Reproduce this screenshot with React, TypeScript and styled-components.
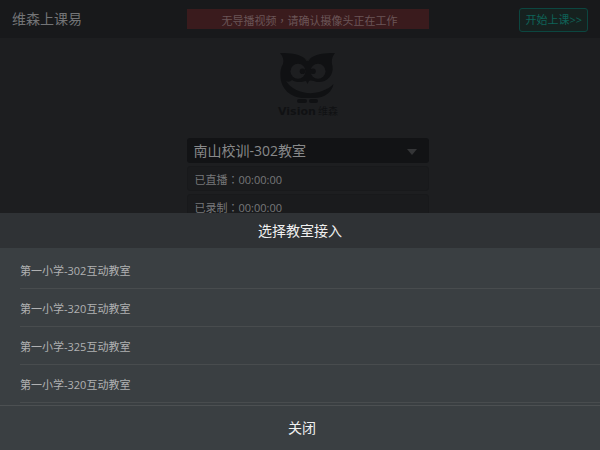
import React from "react";
import styled, { createGlobalStyle } from "styled-components";

const GlobalStyle = createGlobalStyle`
  * { box-sizing: border-box; }
  body {
    margin: 0;
    background: #1d1e20;
    font-family: "Open Sans", "Noto Sans CJK SC", sans-serif;
    font-size: 11px;
    line-height: 16px;
  }
  button, select { font: inherit; }
`;

const Page = styled.div`
  min-height: 100vh;
  color: #77787a;
`;

const Header = styled.header`
  display: grid;
  grid-template-columns: 1fr 242px 1fr;
  align-items: center;
  height: 38px;
  padding-left: 15px;
  background: #18191b;
`;

const Brand = styled.h1`
  margin: 0 0 0 -3px;
  font-size: 14px;
  line-height: 20px;
  font-weight: 400;
  color: #737476;
`;

const Alert = styled.div`
  height: 20px;
  padding-left: 4px;
  line-height: 22px;
  text-align: center;
  background: #3a1b1d;
  color: #6b5557;
`;

const Punct = styled.span`
  font-family: "Noto Sans CJK TC", sans-serif;
`;

const StartButton = styled.button`
  justify-self: end;
  height: 24px;
  margin: 2px 12px 0 0;
  padding: 0 5px;
  border: 1px solid #0c4640;
  border-radius: 3px;
  background: #16211f;
  color: #0e6358;
  white-space: nowrap;
`;

const Main = styled.main`
  display: flex;
  flex-direction: column;
  align-items: center;
  padding-left: 15px;
`;

const Logo = styled.svg`
  width: 64px;
  height: 72px;
  margin: 10px 0 18px;
`;

const Panel = styled.div`
  display: flex;
  flex-direction: column;
  gap: 3px;
  width: 242px;
`;

const SelectBox = styled.div`
  display: grid;
  align-items: center;
  height: 25px;
  border-radius: 3px;
  background: #121315;

  > * { grid-area: 1 / 1; }
`;

const RoomSelect = styled.select`
  appearance: none;
  width: 100%;
  height: 25px;
  padding: 0 24px 0 7px;
  border: 0;
  background: transparent;
  color: #88898a;
  font-size: 14px;
`;

const Arrow = styled.svg`
  justify-self: end;
  width: 10px;
  height: 6px;
  margin: 2px 12px 0 0;
  pointer-events: none;
`;

const Status = styled.div`
  height: 25px;
  padding: 0 7px;
  line-height: 24px;
  border: 1px solid #18191b;
  border-radius: 3px;
  background: #1a1b1d;
`;

const Sheet = styled.section`
  position: fixed;
  left: 0;
  right: 0;
  bottom: 0;
  background: #3a3f42;
`;

const SheetTitle = styled.h2`
  margin: 0;
  font-size: 14px;
  line-height: 35px;
  font-weight: 400;
  text-align: center;
  background: #2f3235;
  color: #f0f0f0;
`;

const RoomList = styled.ul`
  margin: 0;
  padding: 3px 0 2px 20px;
  list-style: none;
`;

const RoomItem = styled.li`
  border-bottom: 1px solid #484c4e;
`;

const RoomButton = styled.button`
  display: block;
  width: 100%;
  padding: 12px 0 9px;
  border: 0;
  background: none;
  color: #b0b1b2;
  text-align: left;
`;

const CloseButton = styled.button`
  display: block;
  width: 100%;
  height: 45px;
  padding: 0 0 0 4px;
  border: 0;
  border-top: 1px solid #4c5052;
  background: none;
  color: #f0f0f0;
  font-size: 14px;
`;

const rooms = [
  "第一小学-302互动教室",
  "第一小学-320互动教室",
  "第一小学-325互动教室",
  "第一小学-320互动教室",
];

const statuses = [
  { label: "已直播", time: "00:00:00" },
  { label: "已录制", time: "00:00:00" },
];

const WordMark = styled.text`
  font-family: "DejaVu Sans", sans-serif;
  font-size: 11px;
  font-weight: 700;
`;

const ChineseMark = styled.text`
  font-family: "Noto Sans CJK SC", sans-serif;
  font-size: 10px;
`;

function OwlLogo() {
  return (
    <Logo viewBox="0 0 64 72" role="img" aria-label="Vision维森" fill="#101113">
      <path d="M4 5C13 5 25 5 31.500 13C38 5 50 5 59 5C56 9 55 13 56.500 18C58 28 50 35 41 34C37 33 34 31 32.500 34L31.500 36L30 33C26 34 20 35 16 32C14 34 12 34 10 33C17 44 33 48 46 43C51 41 55 39 57.500 36C56 44 49 50 38 50H28C14 50 5 40 4.500 29C4 23 5 19 7 16C8 12 7 8 4 5Z" />
      <path d="M24 5Q28 8 31 13M39 5Q35 8 32 13" fill="none" stroke="#1d1e20" strokeWidth="0.8" />
      <circle cx="22" cy="23.300" r="7.500" fill="#1d1e20" />
      <circle cx="42" cy="23.300" r="7.500" fill="#1d1e20" />
      <circle cx="26.500" cy="23.300" r="2.800" />
      <circle cx="37" cy="23.300" r="2.800" />
      <rect x="21" y="51" width="10" height="4" rx="2" />
      <rect x="33" y="51" width="9" height="4" rx="2" />
      <WordMark x="2" y="67">Vision</WordMark>
      <ChineseMark x="42" y="67">维森</ChineseMark>
    </Logo>
  );
}

export default function App() {
  return (
    <>
      <GlobalStyle />
      <Page lang="zh-CN">
        <Header>
          <Brand>维森上课易</Brand>
          <Alert role="alert">
            无导播视频<Punct lang="zh-TW">，</Punct>请确认摄像头正在工作
          </Alert>
          <StartButton type="button">开始上课&gt;&gt;</StartButton>
        </Header>
        <Main>
          <OwlLogo />
          <Panel>
            <SelectBox>
              <RoomSelect aria-label="教室">
                <option>南山校训-302教室</option>
              </RoomSelect>
              <Arrow viewBox="0 0 10 6" aria-hidden="true">
                <path d="M0 0H10L5 6Z" fill="#343537" />
              </Arrow>
            </SelectBox>
            {statuses.map((s) => (
              <Status key={s.label}>
                {s.label}
                <Punct lang="zh-TW">：</Punct>
                {s.time}
              </Status>
            ))}
          </Panel>
        </Main>
        <Sheet role="dialog" aria-labelledby="sheet-title">
          <SheetTitle id="sheet-title">选择教室接入</SheetTitle>
          <RoomList>
            {rooms.map((room, i) => (
              <RoomItem key={i}>
                <RoomButton type="button">{room}</RoomButton>
              </RoomItem>
            ))}
          </RoomList>
          <CloseButton type="button">关闭</CloseButton>
        </Sheet>
      </Page>
    </>
  );
}
